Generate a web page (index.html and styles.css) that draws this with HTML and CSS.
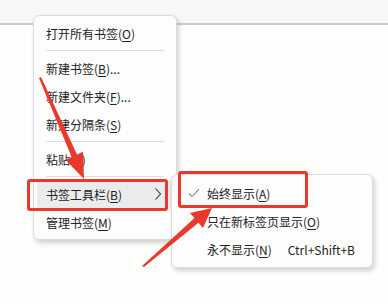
FILE: index.html
```html
<!DOCTYPE html>
<html lang="zh-CN">
<head>
    <meta charset="UTF-8" />
    <title>书签菜单</title>
    <link rel="stylesheet" href="styles.css">
</head>
<body>

<div class="topbar"></div>

<!-- 书签右键菜单 -->
<div class="menu main-menu">
    <div class="item">打开所有书签(<u>O</u>)</div>
    <div class="sep"></div>
    <div class="item">新建书签(<u>B</u>)...</div>
    <div class="item">新建文件夹(<u>F</u>)...</div>
    <div class="item">新建分隔条(<u>S</u>)</div>
    <div class="sep"></div>
    <div class="item">粘贴(<u>P</u>)</div>
    <div class="sep"></div>
    <div class="item active">
        <span>书签工具栏(<u>B</u>)</span>
        <svg class="chevron" width="8" height="14" viewBox="0 0 8 14">
            <path d="M1.5 1.5 L6.5 7 L1.5 12.5" fill="none" stroke="#333" stroke-width="1.1"/>
        </svg>
    </div>
    <div class="item">管理书签(<u>M</u>)</div>
</div>

<div class="menu sub-menu">
    <div class="item">
        <svg class="check" width="12" height="10" viewBox="0 0 12 10">
            <path d="M1 5.5 L4.2 8.5 L11 1.2" fill="none" stroke="#555" stroke-width="1"/>
        </svg>
        <span>始终显示(<u>A</u>)</span>
    </div>
    <div class="item"><span>只在新标签页显示(<u>O</u>)</span></div>
    <div class="item">
        <span>永不显示(<u>N</u>)</span>
        <span class="shortcut">Ctrl+Shift+B</span>
    </div>
</div>

<!-- 标注 -->
<div class="mark mark-1"></div>
<div class="mark mark-2"></div>

<svg class="arrows" width="388" height="304" viewBox="0 0 388 304">
    <polygon points="39,78 41,77 77,154.6 83,151.8 84,179 65.5,159.8 71.6,157" fill="#e8392c"/>
    <polygon points="142,266 144,267 198.5,222.7 203,228 212,208 190,213 194.5,218.1" fill="#e8392c"/>
</svg>

</body>
</html>
```

FILE: styles.css
```css
body {
    margin: 0;
    width: 388px;
    height: 304px;
    position: relative;
    overflow: hidden;
    background: #fefefc;
    font-family: "Noto Sans CJK SC", "Noto Sans", sans-serif;
    font-size: 12px;
    color: #222;
}
.topbar {
    height: 23px;
    background: #f8f8fb;
    border-bottom: 2px solid #cbcbcb;
}
.menu {
    position: absolute;
    background: #fdfdfd;
    border: 1px solid #dcdcdc;
    border-radius: 6px;
    box-shadow: 2px 3px 5px rgba(0, 0, 0, 0.18);
    padding: 3px 0;
    box-sizing: border-box;
}
.main-menu {
    left: 33px;
    top: 15px;
    width: 144px;
}
.sub-menu {
    left: 171px;
    top: 174px;
    width: 202px;
    padding: 4px 0;
}
.item {
    height: 28px;
    margin: 0 3px;
    padding: 0 9px;
    display: flex;
    align-items: center;
    border-radius: 4px;
    white-space: nowrap;
}
.item u {
    text-underline-offset: 2px;
}
.item.active {
    background: #ebebeb;
    justify-content: space-between;
}
.chevron {
    margin-right: 2px;
}
.sep {
    height: 1px;
    margin: 3px 12px;
    background: #dedede;
}
.sub-menu .item {
    padding-left: 32px;
    position: relative;
}
.check {
    position: absolute;
    left: 13px;
    top: 9px;
}
.shortcut {
    margin-left: auto;
    margin-right: 5px;
}
.mark {
    position: absolute;
    border: 3px solid #e8392c;
    border-radius: 3px;
    box-sizing: border-box;
}
.mark-1 {
    left: 27px;
    top: 179px;
    width: 141px;
    height: 32px;
}
.mark-2 {
    left: 178px;
    top: 171px;
    width: 130px;
    height: 37px;
}
.arrows {
    position: absolute;
    left: 0;
    top: 0;
}
```
